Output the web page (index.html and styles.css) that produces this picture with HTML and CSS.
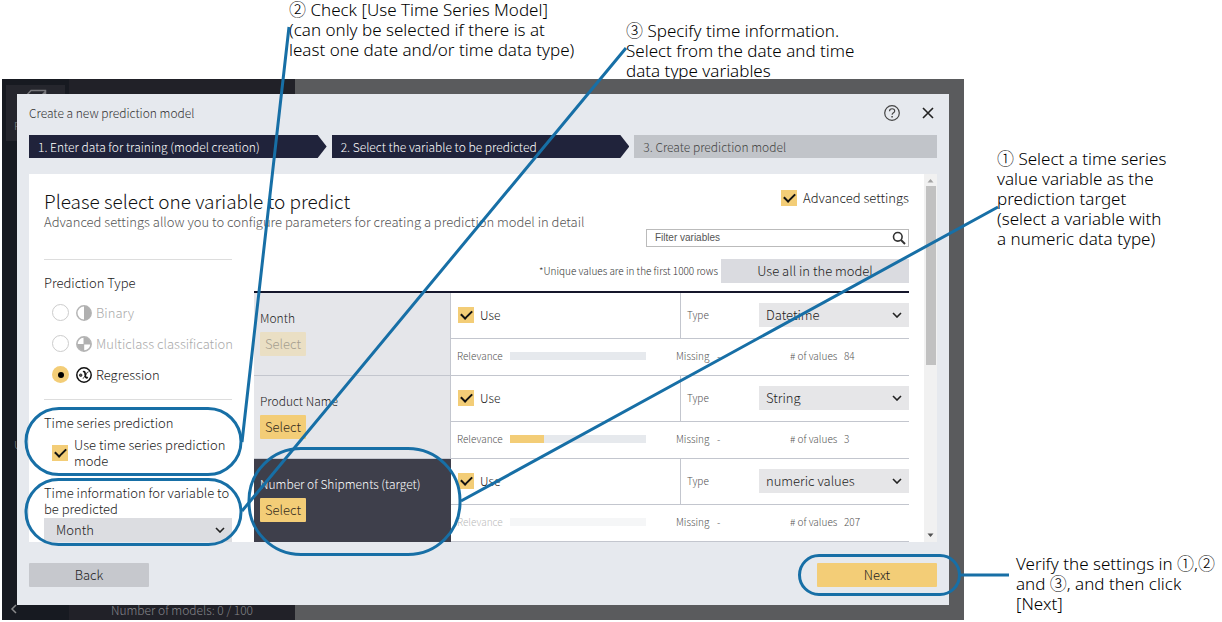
FILE: index.html
```html
<!DOCTYPE html>
<html lang="en">
<head>
<meta charset="utf-8">
<title>Create a new prediction model</title>
<link rel="stylesheet" href="styles.css">
</head>
<body>
<div class="figure">
  <div class="stage">
    <div class="top-notes">
      <p class="note note-check">② Check [Use Time Series Model]<br>(can only be selected if there is at<br>least one date and/or time data type)</p>
      <p class="note note-time">③ Specify time information.<br>Select from the date and time<br>data type variables</p>
    </div>
    <div class="app">
      <div class="app-rail">
        <div class="rail-tile">
          <svg width="24" height="14" viewBox="0 0 24 14" fill="none" stroke="#77777b" stroke-width="1.5"><path d="M2 7 7 1.500h14.500v5.500M1 7h16l5-5"/></svg>
          <span>P</span>
        </div>
        <span class="rail-item">U</span>
        <svg class="rail-back" width="8" height="10" viewBox="0 0 8 10" fill="none" stroke="#8a8a8c" stroke-width="1.500"><path d="M6 1 2 5l4 4"/></svg>
      </div>
      <div class="app-list"><span>Number of models: 0 / 100</span></div>
      <div class="app-main"></div>

      <section class="dialog" aria-labelledby="dialog-title">
        <header class="dialog-head">
          <h1 id="dialog-title">Create a new prediction model</h1>
          <button class="icon-button" aria-label="Help">
            <svg width="18" height="18" viewBox="0 0 18 18" fill="none" stroke="#444" stroke-width="1.200"><circle cx="9" cy="9" r="7.300"/><path d="M6.500 7.300c0-3.400 5.200-3.300 5.200-.4 0 1.900-2.600 1.900-2.600 3.900"/><path d="M9.100 12v1.500" stroke-width="1.500"/></svg>
          </button>
          <button class="icon-button" aria-label="Close">
            <svg width="18" height="18" viewBox="0 0 18 18" fill="none" stroke="#222" stroke-width="1.600"><path d="m4 4 10 10M14 4 4 14"/></svg>
          </button>
        </header>
        <ol class="steps">
          <li class="step step-done">1. Enter data for training (model creation)</li>
          <li class="step step-done">2. Select the variable to be predicted</li>
          <li class="step">3. Create prediction model</li>
        </ol>

        <div class="panel">
          <div class="panel-body">
            <div class="intro">
              <div class="intro-text">
                <h2>Please select one variable to predict</h2>
                <p>Advanced settings allow you to configure parameters for creating a prediction model in detail</p>
              </div>
              <div class="intro-tools">
                <label class="advanced"><input class="check" type="checkbox" checked>Advanced settings</label>
                <div class="filter">
                  <input type="text" placeholder="Filter variables" aria-label="Filter variables">
                  <svg width="14" height="14" viewBox="0 0 14 14" fill="none" stroke="#333"><circle cx="5.800" cy="5.800" r="4.300" stroke-width="1.600"/><path d="m9 9 4 4" stroke-width="2"/></svg>
                </div>
              </div>
            </div>

            <div class="columns">
              <aside class="options">
                <fieldset class="group">
                  <legend>Prediction Type</legend>
                  <label class="choice choice-off"><input class="radio" type="radio" name="kind" disabled>
                    <svg width="16" height="16" viewBox="0 0 16 16"><circle cx="8" cy="8" r="7.200" fill="#fff" stroke="#b5b5b5" stroke-width="1.500"/><path d="M8 .8a7.200 7.200 0 0 1 0 14.400z" fill="#b0b0b0"/></svg>
                    Binary</label>
                  <label class="choice choice-off"><input class="radio" type="radio" name="kind" disabled>
                    <svg width="16" height="16" viewBox="0 0 16 16"><circle cx="8" cy="8" r="7.200" fill="#b0b0b0" stroke="#b5b5b5" stroke-width="1.500"/><path d="M7.500 1.800v6.200h-5.800A6.200 6.200 0 0 1 7.500 1.800zM8.200 8.400h6a6.200 6.200 0 0 1-6 5.800z" fill="#fff"/></svg>
                    Multiclass classification</label>
                  <label class="choice"><input class="radio" type="radio" name="kind" checked>
                    <svg width="16" height="16" viewBox="0 0 16 16" fill="none" stroke="#111"><circle cx="8" cy="8" r="7.200" stroke-width="1.500"/><path d="M7 4.800c2.400-1.200 2 2.200 2.400 4.200.3 2 1.300 2.200 2.300 1.200" stroke-width="1.700"/><path d="M12.500 4.800C10.500 4.600 9.500 10.800 6.800 11.200" stroke-width="1"/><circle cx="4.700" cy="8.200" r="1.300" fill="#555" stroke-width=".7"/></svg>
                    Regression</label>
                </fieldset>
                <div class="group">
                  <div class="group-title">Time series prediction</div>
                  <label class="series-mode"><input class="check" type="checkbox" checked><span>Use time series prediction mode</span></label>
                  <label class="time-label" for="time-var">Time information for variable to be predicted</label>
                  <div class="select select-side"><select id="time-var"><option>Month</option></select><svg class="chevron" viewBox="0 0 10 6"><path d="m1 1 4 4 4-4"/></svg></div>
                </div>
              </aside>

              <div class="variables">
                <div class="variables-bar">
                  <span>*Unique values are in the first 1000 rows</span>
                  <button class="use-all">Use all in the model</button>
                </div>
                <table class="table">
                  <colgroup><col class="col-name"><col><col></colgroup>
                  <tbody>
                    <tr class="row-main">
                      <th rowspan="2" scope="rowgroup"><div class="name">Month</div><button class="pick" disabled>Select</button></th>
                      <td><label class="use"><input class="check" type="checkbox" checked>Use</label></td>
                      <td class="type-cell"><div class="type"><label for="type-1">Type</label><div class="select"><select id="type-1"><option>Datetime</option></select><svg class="chevron" viewBox="0 0 10 6"><path d="m1 1 4 4 4-4"/></svg></div></div></td>
                    </tr>
                    <tr class="row-info"><td colspan="2"><div class="info"><span class="relevance">Relevance</span><span class="bar"></span><span class="missing">Missing</span><span class="dash">-</span><span class="count-label"># of values</span><span>84</span></div></td></tr>
                  </tbody>
                  <tbody>
                    <tr class="row-main">
                      <th rowspan="2" scope="rowgroup"><div class="name">Product Name</div><button class="pick">Select</button></th>
                      <td><label class="use"><input class="check" type="checkbox" checked>Use</label></td>
                      <td class="type-cell"><div class="type"><label for="type-2">Type</label><div class="select"><select id="type-2"><option>String</option></select><svg class="chevron" viewBox="0 0 10 6"><path d="m1 1 4 4 4-4"/></svg></div></div></td>
                    </tr>
                    <tr class="row-info"><td colspan="2"><div class="info"><span class="relevance">Relevance</span><span class="bar"><span class="bar-fill" style="width: 25%"></span></span><span class="missing">Missing</span><span class="dash">-</span><span class="count-label"># of values</span><span>3</span></div></td></tr>
                  </tbody>
                  <tbody class="target">
                    <tr class="row-main">
                      <th rowspan="2" scope="rowgroup"><div class="name">Number of Shipments (target)</div><button class="pick">Select</button></th>
                      <td><label class="use"><input class="check" type="checkbox" checked>Use</label></td>
                      <td class="type-cell"><div class="type"><label for="type-3">Type</label><div class="select"><select id="type-3"><option>numeric values</option></select><svg class="chevron" viewBox="0 0 10 6"><path d="m1 1 4 4 4-4"/></svg></div></div></td>
                    </tr>
                    <tr class="row-info"><td colspan="2"><div class="info"><span class="relevance">Relevance</span><span class="bar"></span><span class="missing">Missing</span><span class="dash">-</span><span class="count-label"># of values</span><span>207</span></div></td></tr>
                  </tbody>
                </table>
              </div>
            </div>
          </div>
          <div class="scrollbar" aria-hidden="true">
            <svg width="7" height="4" viewBox="0 0 7 4"><path d="M3.500 0 6.500 3.500h-6z" fill="#a3a3a3"/></svg>
            <div class="track"><div class="thumb"></div></div>
            <svg width="7" height="4" viewBox="0 0 7 4"><path d="M3.500 4 .5.500h6z" fill="#505050"/></svg>
          </div>
        </div>

        <footer class="dialog-foot">
          <button class="action">Back</button>
          <button class="action action-next">Next</button>
        </footer>
      </section>
    </div>
  </div>

  <div class="side-notes">
    <p class="note">① Select a time series<br>value variable as the<br>prediction target<br>(select a variable with<br>a numeric data type)</p>
    <p class="note note-verify">Verify the settings in ①,②<br>and ③, and then click<br>[Next]</p>
  </div>

  <svg class="callouts" width="1222" height="622" viewBox="0 0 1222 622" aria-hidden="true">
    <rect x="26" y="408.500" width="215" height="66" rx="33"/>
    <rect x="26" y="479.500" width="215" height="65" rx="32.500"/>
    <rect x="249" y="448.500" width="211" height="106" rx="52"/>
    <rect x="799.500" y="555.500" width="160" height="39" rx="19.500"/>
    <path d="M289 27 242 442M626 48 242 511M998 207 461 501M960 575h49"/>
  </svg>
</div>
</body>
</html>
```
FILE: styles.css
```css
* { box-sizing: border-box; }

body {
  margin: 0;
  background: #fff;
  color: #222;
  font-family: "Noto Sans CJK JP", "Noto Sans", sans-serif;
  font-size: 13px;
  font-weight: 300;
  line-height: 20px;
}

h1, h2, p, ol, fieldset { margin: 0; padding: 0; }
h1, h2, th { font-weight: inherit; }
button, input, select { font: inherit; color: inherit; margin: 0; border: 0; border-radius: 0; }
button { padding: 0; }
svg { display: block; flex: none; }

.figure {
  position: relative;
  display: grid;
  grid-template-columns: minmax(0, 1fr) 258px;
}

/* Annotations */
.note {
  color: #000;
  font-family: "Noto Sans", "Noto Sans CJK JP", sans-serif;
  font-size: 17px;
  line-height: 20px;
  white-space: nowrap;
}
.top-notes { display: flex; height: 79px; padding-left: 289px; }
.note-check { width: 337px; }
.note-time { padding-top: 21px; }
.side-notes { padding: 149px 0 0 33px; }
.note-verify { padding: 305px 0 0 19px; }
.callouts {
  position: absolute;
  top: 0;
  left: 0;
  z-index: 2;
  fill: none;
  stroke: #176fa6;
  stroke-width: 3;
  pointer-events: none;
}

/* Dimmed application behind the dialog */
.app {
  display: grid;
  grid-template-columns: 67px 226px minmax(0, 1fr);
  margin-left: 2px;
  color: #85858a;
}
.app > * { grid-row: 1; }
.app-rail { grid-column: 1; display: flex; flex-direction: column; padding: 6px 4px; background: #171a21; }
.rail-tile { display: grid; align-content: start; justify-items: center; gap: 12px; height: 56px; padding: 4px 8px 0; background: #25262d; }
.rail-tile span { justify-self: start; font-size: 11px; }
.rail-item { margin: 293px 8px auto; font-size: 11px; }
.rail-back { margin-left: 4px; }
.app-list { grid-column: 2; display: flex; align-items: end; justify-content: center; background: #212128; }
.app-list span { font-size: 12px; }
.app-main { grid-column: 3; background: #5a5b5d; }

/* Dialog */
.dialog {
  grid-column: 1 / -1;
  margin: 15px;
  padding: 0 12px 18px;
  background: #e6e9ee;
  color: #222;
  z-index: 1;
}
.dialog-head { display: flex; align-items: center; gap: 18px; height: 41px; padding-bottom: 3px; }
.dialog-head h1 { flex: 1; font-size: 12px; color: #333; }
.icon-button { background: none; }
.steps { display: grid; grid-template-columns: 298fr 298fr 303fr; gap: 5px; list-style: none; font-size: 12px; line-height: 23px; }
.step { padding-left: 9px; background: #c1c4c9; color: #444; white-space: nowrap; }
.step-done {
  background: #20233b;
  color: #fff;
  clip-path: polygon(0 0, calc(100% - 9px) 0, 100% 50%, calc(100% - 9px) 100%, 0 100%);
}
.panel { display: flex; margin-top: 16px; background: #fff; }
.panel-body { flex: 1; min-width: 0; padding: 14px 15px 0; }
.intro { display: flex; justify-content: space-between; }
.intro h2 { font-size: 19px; line-height: 26px; color: #111; }
.intro p { line-height: 16px; color: #555; white-space: nowrap; }
.intro-tools { display: flex; flex-direction: column; align-items: flex-end; }
.advanced { display: flex; align-items: center; gap: 6px; }
.filter { display: flex; align-items: center; width: 263px; height: 18px; margin-top: 21px; padding: 0 2px 0 8px; border: 1px solid #bbb; }
.filter input { flex: 1; min-width: 0; height: 16px; padding: 0; outline: 0; font: 10px/16px "Liberation Sans", sans-serif; background: none; }
.filter input::placeholder { color: #555; }

.check, .radio { appearance: none; flex: none; display: grid; place-items: center; }
.check { width: 16px; height: 16px; background: #f3cd77; }
.check:checked::after {
  content: "";
  width: 9px;
  height: 5px;
  margin-bottom: 3px;
  border: solid #111;
  border-width: 0 0 2px 2px;
  transform: rotate(-45deg);
}
.radio { width: 17px; height: 17px; border: 1px solid #ccc; border-radius: 50%; background: #fff; }
.radio:checked { border: 0; background: #f3cd77; }
.radio:checked::after { content: ""; width: 6px; height: 6px; border-radius: 50%; background: #000; }

.columns { display: grid; grid-template-columns: 188px minmax(0, 1fr); gap: 22px; margin-top: 12px; }
.group { min-width: 0; border: 0; border-top: 1px solid #ddd; padding-top: 13px; }
.group + .group { margin-top: 9px; }
.group legend { float: left; width: 100%; padding: 0; margin-bottom: 4px; }
.choice { display: flex; clear: both; align-items: center; height: 31px; padding-left: 8px; white-space: nowrap; }
.choice svg { margin: 0 4px 0 7px; }
.choice-off { color: #aaa; }
.series-mode { display: flex; align-items: center; gap: 6px; margin-top: 4px; padding-left: 8px; line-height: 16px; }
.time-label { display: block; margin-top: 16px; padding-bottom: 1px; line-height: 16px; }

.select { display: grid; flex: none; width: 150px; }
.select select { grid-area: 1 / 1; appearance: none; height: 24px; padding: 0 24px 0 7px; background: #e6e6e8; }
.chevron { grid-area: 1 / 1; align-self: center; justify-self: end; width: 10px; height: 6px; margin-right: 7px; fill: none; stroke: #222; stroke-width: 1.600; pointer-events: none; }
.select-side { width: auto; }
.select-side select { padding-left: 12px; background: #dcdde1; }

.variables-bar { display: flex; justify-content: flex-end; align-items: center; gap: 3px; margin-bottom: 8px; font-size: 10px; color: #333; }
.use-all { width: 188px; height: 24px; background: #dadbe0; font-size: 13px; color: #222; }
.table { width: 100%; table-layout: fixed; border-spacing: 0; border-top: 2px solid #15162b; }
.col-name { width: 197px; }
.row-main { height: 46px; }
.row-info { height: 37px; }
.table td, .table th { padding: 0 0 2px; border-bottom: 1px solid #c3c6ce; text-align: left; }
.table th { padding: 0 0 4px 6px; border-right: 1px solid #c3c6ce; background: #e5e6ea; }
.name { font-size: 12px; line-height: 20px; white-space: nowrap; }
.pick { width: 46px; height: 24px; margin-top: 4px; background: #f3cd77; border-radius: 1px; color: #332c1c; }
.pick:disabled { background: #eadfc4; color: #a59e8f; }
.target th { background: #3e3f4b; border-color: #3e3f4b; color: #fff; }
.use { display: flex; align-items: center; gap: 6px; padding-left: 7px; font-size: 12px; }
.table .type-cell { border-left: 1px solid #c3c6ce; }
.type { display: flex; align-items: center; justify-content: space-between; padding-left: 6px; }
.type > label { font-size: 10px; color: #555; }
.info { display: flex; align-items: center; padding-left: 6px; font-size: 10px; color: #555; white-space: nowrap; }
.relevance { width: 53px; }
.bar { width: 136px; height: 8px; margin-right: 30px; background: #e6e9ed; }
.bar-fill { display: block; height: 100%; background: #f3cd77; }
.missing { width: 41px; }
.dash { width: 73px; }
.count-label { width: 54px; }
.target .relevance { color: #bbb; }
.target .bar { background: #f5f6f7; }

.scrollbar { display: flex; flex-direction: column; align-items: center; width: 13px; padding: 5px 0; background: #f1f1f1; }
.track { flex: 1; width: 10px; padding: 3px 0; }
.thumb { height: 52%; background: #c1c1c1; }

.dialog-foot { display: flex; justify-content: space-between; margin-top: 21px; }
.action { width: 120px; height: 24px; background: #c6c8cd; border-radius: 1px; }
.action-next { background: #f3cd77; color: #222; }
```
